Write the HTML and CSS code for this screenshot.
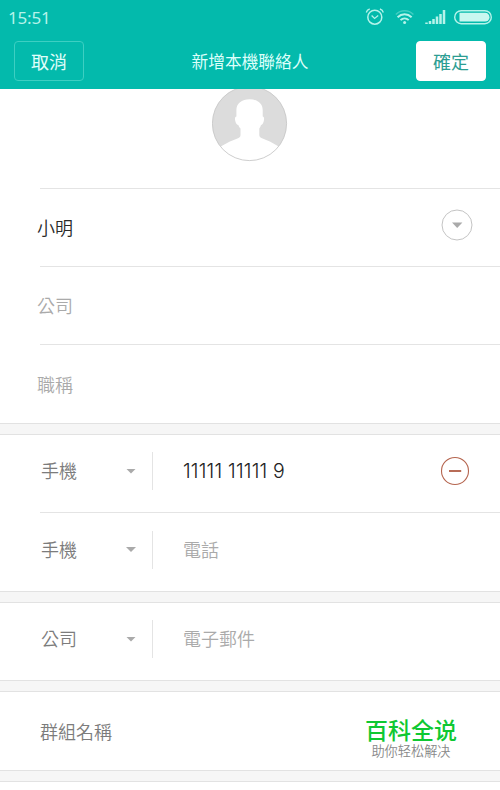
FILE: index.html
```html
<!DOCTYPE html>
<html lang="zh-Hant">
<head>
  <meta charset="UTF-8" />
  <title>新增本機聯絡人</title>
  <meta name="viewport" content="width=device-width, initial-scale=1.0" />
  <link rel="stylesheet" href="styles.css">
</head>
<body>

  <header class="header">
    <div class="status">
      <span class="time">15:51</span>
      <svg class="status-icons" width="130" height="22" viewBox="0 0 130 22" fill="none" stroke="#b5f3ea">
        <!-- alarm -->
        <circle cx="12.8" cy="12.2" r="7" stroke-width="1.5" />
        <path d="M9.6 10.6l3 2.8 3.6-2.8M4.3 7.5c.4-1.8 1.6-3 3.4-3.5M17.9 4c1.8.5 3 1.7 3.4 3.5" stroke-width="1.3" />
        <!-- wifi -->
        <path d="M33.8 9.4c5-4.8 12.6-4.8 17.6 0" stroke-width="1.4" opacity=".35" />
        <path d="M35.6 12.2c4-3.8 10-3.8 14 0M38.5 15.1c2.4-2.3 5.8-2.3 8.2 0" stroke-width="2" />
        <circle cx="42.6" cy="17.6" r="1.5" fill="#b5f3ea" stroke="none" />
        <!-- signal -->
        <path d="M64.5 17.5V19M68 16v3M71.5 14v5M75 11.5V19M78.5 9v10M82 5v14" stroke-width="2.5" />
        <!-- battery -->
        <rect x="92.7" y="5.7" width="36.6" height="13" rx="6.5" stroke-width="1.4" />
        <path d="M97.5 7.8h25.6a4.4 4.4 0 0 1 0 8.8H97.5z" fill="#c9f7f0" stroke="none" />
      </svg>
    </div>
    <div class="toolbar">
      <button class="btn cancel">取消</button>
      <h1>新增本機聯絡人</h1>
      <button class="btn confirm">確定</button>
    </div>
  </header>

  <main>
    <div class="avatar">
      <svg width="76" height="76" viewBox="0 0 76 76">
        <defs>
          <clipPath id="round"><circle cx="37.5" cy="37.5" r="37.2" /></clipPath>
        </defs>
        <circle cx="37.5" cy="37.5" r="37.2" fill="#dcdcdc" />
        <path clip-path="url(#round)" fill="#fff" d="M37.6 13.3C45.5 13.3 50.7 17.5 50.7 24V30.5C52.6 30.8 52.2 33.5 51.6 35.7C51 37.7 50.2 38.7 49 39C48.6 40.6 48 41.5 47.3 42.5V49C47.3 51 48.5 51.6 50 52.2C56 54.5 60 56.3 65 59.5L72 64V76H3V64L10.5 59.5C15.5 56.3 20 54.5 26 52.2C27.5 51.6 28.5 51 28.5 49V42.5C27.5 41.5 26.8 40.6 26.3 39C25 38.7 24 37.7 23.5 35.7C22.8 33.5 22.5 30.8 24.4 30.5V24C24.4 17.5 29.7 13.3 37.6 13.3Z" />
        <circle cx="37.5" cy="37.5" r="37.1" fill="none" stroke="#c4c4c4" stroke-width=".8" />
      </svg>
    </div>

    <div class="row">
      <span class="value">小明</span>
      <svg class="expand" width="32" height="32" viewBox="0 0 32 32">
        <circle cx="16" cy="16" r="15" fill="none" stroke="#c4c4c4" />
        <path d="M11 13.5h10.4L16.2 19z" fill="#aaa" />
      </svg>
    </div>
    <div class="row"><span class="hint">公司</span></div>
    <div class="row last"><span class="hint">職稱</span></div>

    <div class="gap"></div>

    <div class="field">
      <span class="label">手機</span><i class="arrow"></i>
      <span class="number">11111 11111 9</span>
      <svg class="remove" width="30" height="30" viewBox="0 0 30 30" fill="none" stroke="#b5654f">
        <circle cx="15" cy="15" r="13.5" stroke-width="1.1" />
        <path d="M9 15h12.2" stroke-width="1.9" />
      </svg>
    </div>
    <div class="field divided">
      <span class="label">手機</span><i class="arrow"></i>
      <span class="hint">電話</span>
    </div>

    <div class="gap"></div>

    <div class="field">
      <span class="label">公司</span><i class="arrow"></i>
      <span class="hint">電子郵件</span>
    </div>

    <div class="gap"></div>

    <div class="group">
      <span class="group-name">群組名稱</span>
      <div class="brand" lang="zh-Hans">
        <strong>百科全说</strong>
        <small>助你轻松解决</small>
      </div>
    </div>

    <div class="gap"></div>
  </main>

</body>
</html>
```

FILE: styles.css
```css
* {
  box-sizing: border-box;
}

body {
  margin: 0;
  height: 790px;
  overflow: hidden;
  background: #fff;
  color: #333;
  font-family: "Noto Sans CJK TC", sans-serif;
  font-size: 18px;
  line-height: 26px;
}

.header {
  height: 89px;
  background: #03baac;
}

.status {
  display: flex;
  justify-content: space-between;
  height: 41px;
  padding: 5px 8px 0;
}

.time {
  color: #b5f3ea;
  font-family: "Noto Sans", sans-serif;
  font-size: 17px;
  letter-spacing: -0.2px;
}

.toolbar {
  display: flex;
  justify-content: space-between;
  padding: 0 14px;
}

h1 {
  margin: 0;
  color: #dcfffa;
  font-size: 16.7px;
  font-weight: 400;
  line-height: 41px;
}

.btn {
  width: 70px;
  height: 40px;
  padding: 0;
  border: 1px solid #3dcfc2;
  border-radius: 4px;
  background: none;
  font-family: inherit;
  font-size: 18px;
  line-height: 38px;
}

.cancel {
  color: #e0fffb;
}

.confirm {
  border-color: #fff;
  background: #fff;
  color: #2b9d92;
}

.avatar {
  display: flex;
  justify-content: center;
  height: 99px;
  overflow: hidden;
}

.avatar svg {
  flex: none;
  margin-top: -3px;
}

.row {
  display: flex;
  align-items: center;
  justify-content: space-between;
  height: 78px;
  margin-left: 40px;
  padding-right: 27px;
  border-top: 1px solid #e4e4e4;
}

.row span {
  margin: -2px 0 0 -3px;
}

.row.last {
  height: 79px;
}

.row.last span {
  margin-top: 0;
}

.expand {
  margin-top: -5px;
}

.value {
  color: #2a2a2a;
  font-weight: 350;
}

.hint {
  color: #aaa;
  font-weight: 350;
}

.gap {
  height: 12px;
  border-top: 1px solid #e2e2e2;
  border-bottom: 1px solid #e2e2e2;
  background: #f6f6f6;
}

.field {
  display: flex;
  align-items: center;
  height: 77px;
  margin-left: 40px;
  padding: 0 30px 5px 1px;
}

.field.divided {
  height: 79px;
  border-top: 1px solid #e4e4e4;
}

.label {
  width: 85px;
  margin-top: -2px;
  color: #7c7c7c;
  font-weight: 350;
}

.arrow {
  flex: none;
  width: 10px;
  height: 5px;
  background: #aaa;
  clip-path: polygon(0 0, 100% 0, 50% 100%);
}

.field .hint,
.number {
  height: 38px;
  margin-left: 16px;
  padding-left: 30px;
  border-left: 1px solid #e4e4e4;
  line-height: 36px;
}

.number {
  color: #222;
  font-family: Inter, sans-serif;
  font-size: 19.5px;
  font-weight: 340;
  letter-spacing: 0.2px;
  line-height: 39px;
}

.remove {
  margin-left: auto;
}

.group {
  display: flex;
  justify-content: space-between;
  height: 78px;
  padding: 0 43px 0 40px;
}

.group-name {
  color: #7c7c7c;
  font-weight: 350;
  line-height: 78px;
}

.brand {
  padding-top: 25px;
  font-family: "Liberation Sans", "Noto Sans CJK SC", sans-serif;
  text-align: center;
}

.brand strong,
.brand small {
  display: block;
}

.brand strong {
  color: #0fc832;
  font-size: 23px;
  font-weight: 500;
  line-height: 28px;
}

.brand small {
  color: #888;
  font-size: 13.2px;
  font-weight: 350;
  line-height: 14px;
}
```
